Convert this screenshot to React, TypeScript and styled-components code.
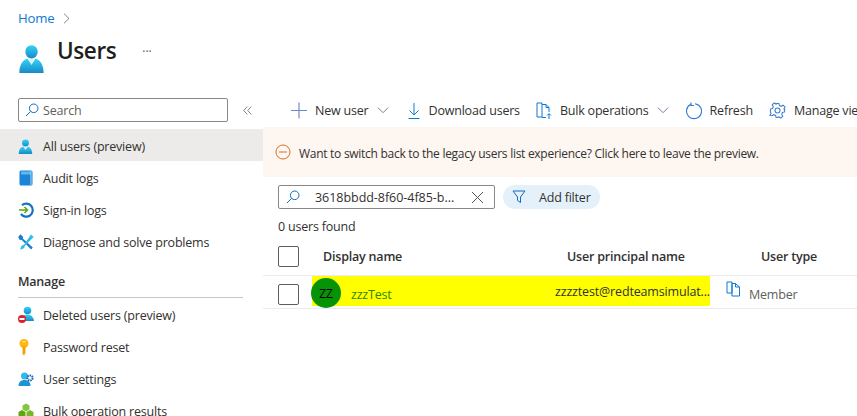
import React from "react";
import styled, { createGlobalStyle } from "styled-components";

const GlobalStyle = createGlobalStyle`
  html, body {
    margin: 0;
    padding: 0;
    background: #fff;
    overflow: hidden;
  }
  body {
    font-family: "Open Sans", "Noto Sans", "Liberation Sans", sans-serif;
    font-size: 12.5px;
    color: #323130;
    letter-spacing: -0.2px;
  }
`;

const UserGlyph = ({ width = 20, height = 20 }: { width?: number; height?: number }) => (
  <svg width={width} height={height} viewBox="0 0 20 20" preserveAspectRatio="none">
    <defs>
      <linearGradient id="ug" x1="0" y1="0" x2="0" y2="1">
        <stop offset="0" stopColor="#32d4f5" />
        <stop offset="1" stopColor="#1988c8" />
      </linearGradient>
    </defs>
    <circle cx="10" cy="5.4" r="4.6" fill="url(#ug)" />
    <path d="M1 20c0-6 3-9.500 6-9.800L10 14l3-3.800c3 .3 6 3.800 6 9.800z" fill="url(#ug)" />
    <path d="M7.500 10.400h5L10 14.500z" fill="#d9f3fb" />
  </svg>
);

const BookGlyph = () => (
  <svg width="16" height="16" viewBox="0 0 16 16">
    <rect x="1.500" y="0.500" width="13" height="15" rx="1.500" fill="#1b84d6" />
    <rect x="3" y="1.500" width="10" height="3" fill="#5fb8f0" />
    <rect x="12.500" y="1" width="1" height="14" fill="#a7d5f5" />
  </svg>
);

const SignInGlyph = () => (
  <svg width="16" height="16" viewBox="0 0 16 16" fill="none">
    <path d="M4 3.200A6.500 6.500 0 1 1 3 12" stroke="#0f74c4" strokeWidth="2.200" />
    <path d="M1 8h8.500M6.500 5l3 3-3 3" stroke="#5ea60e" strokeWidth="1.500" />
  </svg>
);

const ToolsGlyph = () => (
  <svg width="16" height="16" viewBox="0 0 16 16">
    <path d="M2.500 0.200L5.200 3l-.4 1.600 10 9-1.700 2-9.300-9.500-2.300-.3L0.200 3z" fill="#1b7fd0" />
    <path d="M13 0.500l2.700 2.500-8.700 8.700-1 2.500-4 1.600 1.500-4.100 2.500-1z" fill="#32bde8" />
  </svg>
);

const DeletedGlyph = () => (
  <svg width="17" height="18" viewBox="0 0 17 18">
    <defs>
      <linearGradient id="dg" x1="0" y1="0" x2="0" y2="1">
        <stop offset="0" stopColor="#32d4f5" />
        <stop offset="1" stopColor="#1988c8" />
      </linearGradient>
    </defs>
    <circle cx="9.500" cy="4.500" r="3.800" fill="url(#dg)" />
    <path d="M3.500 15c0-4 2.500-6.500 6-6.500s6 2.500 6.500 6.500z" fill="url(#dg)" />
    <circle cx="4" cy="13" r="4" fill="#d8232a" />
    <rect x="1.500" y="12" width="5" height="2" fill="#fff" />
  </svg>
);

const KeyGlyph = () => (
  <svg width="12" height="17" viewBox="0 0 12 17">
    <circle cx="6" cy="4.500" r="4.500" fill="#fcb914" />
    <path d="M4.500 7h3v7L6 16.500 4.500 15z" fill="#f2a60c" />
    <rect x="4.500" y="2" width="3" height="1.500" fill="#ffe08a" />
  </svg>
);

const SettingsGlyph = () => (
  <svg width="16" height="15" viewBox="0 0 16 15">
    <circle cx="6.500" cy="4" r="3.500" fill="#30b8e6" />
    <path d="M0.500 14c0-4 2.500-6 6-6s6 2 6 6z" fill="#1f93d4" />
    <circle cx="12" cy="6" r="2.600" fill="none" stroke="#1565c0" strokeWidth="2" strokeDasharray="1.500 0.800" />
  </svg>
);

const CubesGlyph = () => (
  <svg width="16" height="16" viewBox="0 0 16 16">
    <path d="M8 0.500l3.500 2v4L8 8.500l-3.500-2v-4z" fill="#86c540" />
    <path d="M4 7l3.500 2v4L4 15 .5 13V9z" fill="#5ea60e" />
    <path d="M12 7l3.500 2v4L12 15l-3.500-2V9z" fill="#76b82a" />
  </svg>
);

const SearchGlyph = () => (
  <svg width="14" height="14" viewBox="0 0 14 14" fill="none" stroke="#0f6cbd" strokeWidth="1">
    <circle cx="8.700" cy="5.300" r="4.300" />
    <path d="M5.600 8.400L1 13" />
  </svg>
);

const Chevron = () => (
  <svg width="12" height="7" viewBox="0 0 12 7" fill="none" stroke="#6f7e96" strokeWidth="1">
    <path d="M1 .7l5 5 5-5" />
  </svg>
);

const navTop = [
  { label: "All users (preview)", icon: <UserGlyph width={15} height={15} />, active: true },
  { label: "Audit logs", icon: <BookGlyph /> },
  { label: "Sign-in logs", icon: <SignInGlyph /> },
  { label: "Diagnose and solve problems", icon: <ToolsGlyph /> },
];

const navManage = [
  { label: "Deleted users (preview)", icon: <DeletedGlyph /> },
  { label: "Password reset", icon: <KeyGlyph /> },
  { label: "User settings", icon: <SettingsGlyph /> },
  { label: "Bulk operation results", icon: <CubesGlyph /> },
];

export default function App() {
  return (
    <Page>
      <GlobalStyle />
      <Header>
        <Crumbs>
          <HomeLink>Home</HomeLink>
          <svg width="7" height="11" viewBox="0 0 7 11" fill="none" stroke="#7a7a7a" strokeWidth="0.900">
            <path d="M1 .7l5 4.800-5 4.800" />
          </svg>
        </Crumbs>
        <TitleRow>
          <TitleIcon>
            <UserGlyph width={27} height={29} />
          </TitleIcon>
          <Title>Users</Title>
          <More>···</More>
        </TitleRow>
      </Header>
      <Body>
        <Sidebar>
          <SideSearchRow>
            <SideSearch>
              <SearchGlyph />
              <span>Search</span>
            </SideSearch>
            <Collapse>
              <svg width="9" height="9" viewBox="0 0 9 9" fill="none" stroke="#777" strokeWidth="0.900">
                <path d="M4.300 .5L.7 4.500l3.600 4M8.300 .5L4.700 4.500l3.600 4" />
              </svg>
            </Collapse>
          </SideSearchRow>
          {navTop.map((n) => (
            <NavItem key={n.label} $active={n.active}>
              <NavIcon>{n.icon}</NavIcon>
              {n.label}
            </NavItem>
          ))}
          <SectionTitle>Manage</SectionTitle>
          {navManage.map((n) => (
            <NavItem key={n.label}>
              <NavIcon>{n.icon}</NavIcon>
              {n.label}
            </NavItem>
          ))}
        </Sidebar>
        <Main>
          <Toolbar>
            <ToolButton $tail={2}>
              <svg width="16" height="17" viewBox="0 0 17 17" stroke="#6f86c9" strokeWidth="1.200">
                <path d="M8.500 0v17M0 8.500h17" />
              </svg>
              New user
              <Chevron />
            </ToolButton>
            <ToolButton>
              <svg width="14" height="18" viewBox="0 0 14 18" fill="none" stroke="#0f78d4" strokeWidth="1">
                <path d="M7 1v12M2.500 8.500L7 13l4.500-4.500M1.500 16.500h11" />
              </svg>
              Download users
            </ToolButton>
            <ToolButton>
              <svg width="16" height="18" viewBox="0 0 16 18" fill="none" stroke="#0f78d4" strokeWidth="1">
                <path d="M1 1h5v14H1zM6 2.500h4l3 3V10M10 2.500v3h3M6 15.500h4M13 17v-5M11 13.500l2-2 2 2" />
              </svg>
              Bulk operations
              <Chevron />
            </ToolButton>
            <ToolButton>
              <svg width="17" height="18" viewBox="0 0 17 18" fill="none" stroke="#2b7cd3" strokeWidth="1.100">
                <path d="M5.500 2.500a7.500 7.500 0 1 0 4.500-.8M6 .5v3h3" />
              </svg>
              Refresh
            </ToolButton>
            <ToolButton>
              <svg width="17" height="17" viewBox="0 0 24 24" fill="none" stroke="#3f7fd0" strokeWidth="1.500">
                <circle cx="12" cy="12" r="3.500" />
                <path d="M10 2h4l.7 3 2.500 1.100 2.700-1.600 2.800 2.800-1.600 2.700L22 10v4l-3 .7-1.100 2.500 1.600 2.700-2.800 2.800-2.700-1.600-2.500.9H10l-.7-3-2.500-1.100-2.700 1.600L1.300 19l1.600-2.700L2 14v-4l3-.7 1.100-2.500L4.500 4 7.300 1.300 10 2.900z" />
              </svg>
              Manage view
            </ToolButton>
          </Toolbar>
          <Banner>
            <svg width="16" height="16" viewBox="0 0 16 16" fill="none" stroke="#d9701f" strokeWidth="1">
              <circle cx="8" cy="8" r="7" />
              <path d="M4 8h8" />
            </svg>
            <BannerText>
              Want to switch back to the legacy users list experience? Click here to leave the preview.
            </BannerText>
          </Banner>
          <Filters>
            <FilterSearch>
              <SearchGlyph />
              <FilterValue>3618bbdd-8f60-4f85-b...</FilterValue>
              <svg width="13" height="13" viewBox="0 0 13 13" stroke="#555" strokeWidth="1">
                <path d="M1 1l11 11M12 1L1 12" />
              </svg>
            </FilterSearch>
            <FilterPill>
              <svg width="14" height="14" viewBox="0 0 14 14" fill="none" stroke="#0f6cbd" strokeWidth="1">
                <path d="M1 1h12L8.500 7v5.500l-3-2V7z" />
              </svg>
              Add filter
            </FilterPill>
          </Filters>
          <Count>0 users found</Count>
          <HeadRow>
            <Check />
            <HeadName>Display name</HeadName>
            <HeadUpn>User principal name</HeadUpn>
            <HeadType>User type</HeadType>
          </HeadRow>
          <DataRow>
            <Check />
            <Highlight>
              <Avatar>ZZ</Avatar>
              <NameLink>zzzTest</NameLink>
              <Upn>zzzztest@redteamsimulat...</Upn>
            </Highlight>
            <CopyIcon>
              <svg width="15" height="16" viewBox="0 0 15 16" fill="none" stroke="#0f78d4" strokeWidth="1">
                <path d="M1 1h5v11H1zM6 2.500h3.500L13.500 6v9H6zM9.500 2.500V6h4" />
              </svg>
            </CopyIcon>
            <Member>Member</Member>
          </DataRow>
        </Main>
      </Body>
    </Page>
  );
}

const Page = styled.div`
  width: 857px;
  height: 416px;
  overflow: hidden;
  display: flex;
  flex-direction: column;
`;

const Header = styled.header`
  height: 92px;
  padding: 9px 0 0 18px;
  box-sizing: border-box;
  flex: none;
`;

const Crumbs = styled.div`
  display: flex;
  align-items: center;
  gap: 9px;
  height: 18px;
`;

const HomeLink = styled.a`
  color: #0f78d4;
  font-size: 13.2px;
`;

const TitleRow = styled.div`
  display: flex;
  align-items: flex-start;
  margin-top: 8px;
`;

const TitleIcon = styled.div`
  margin-top: 9px;
  height: 29px;
  width: 39px;
`;

const Title = styled.h1`
  margin: 0;
  font-size: 22.5px;
  line-height: 32px;
  font-weight: 600;
  color: #201f1e;
  letter-spacing: -0.4px;
`;

const More = styled.span`
  margin: 8px 0 0 26px;
  font-size: 12px;
  color: #555;
  letter-spacing: 0;
`;

const Body = styled.div`
  display: flex;
  flex: 1;
  min-height: 0;
`;

const Sidebar = styled.nav`
  width: 263px;
  flex: none;
`;

const SideSearchRow = styled.div`
  display: flex;
  align-items: flex-start;
  height: 37px;
  padding: 6px 0 0 18px;
  box-sizing: border-box;
`;

const SideSearch = styled.div`
  width: 210px;
  height: 24px;
  box-sizing: border-box;
  border: 1px solid #8a8886;
  border-radius: 2px;
  display: flex;
  align-items: center;
  gap: 4px;
  padding-left: 6px;
  color: #605e5c;
`;

const Collapse = styled.span`
  margin: 8px 0 0 15px;
  display: flex;
`;

const NavItem = styled.div<{ $active?: boolean }>`
  height: 32px;
  box-sizing: border-box;
  padding: 2px 0 0 18px;
  display: flex;
  align-items: center;
  white-space: nowrap;
  background: ${(p) => (p.$active ? "#edebe9" : "transparent")};
`;

const NavIcon = styled.span`
  width: 25px;
  display: flex;
  justify-content: flex-start;
  flex: none;
`;

const SectionTitle = styled.div`
  margin: 11px 20px 0 18px;
  height: 30px;
  line-height: 28px;
  border-bottom: 1px solid #c8c6c4;
  box-sizing: border-box;
  font-weight: 600;
  color: #323130;
`;

const Main = styled.main`
  flex: 1;
  min-width: 0;
  overflow: hidden;
`;

const Toolbar = styled.div`
  height: 35px;
  box-sizing: border-box;
  padding: 2px 0 0 28px;
  display: flex;
  align-items: center;
  gap: 16px;
  white-space: nowrap;
`;

const ToolButton = styled.div<{ $tail?: number }>`
  display: flex;
  align-items: center;
  gap: 8px;
  flex: none;
  margin-right: ${(p) => p.$tail ?? 0}px;
`;

const Banner = styled.div`
  height: 50px;
  background: #fdf6f1;
  display: flex;
  align-items: center;
  gap: 8px;
  padding-left: 12px;
  white-space: nowrap;
  font-size: 12px;
`;

const BannerText = styled.span`
  margin-top: 2px;
  letter-spacing: -0.28px;
`;

const Filters = styled.div`
  display: flex;
  gap: 8px;
  padding: 8px 0 0 15px;
`;

const FilterSearch = styled.div`
  width: 217px;
  height: 24px;
  box-sizing: border-box;
  border: 1px solid #8a8886;
  border-radius: 2px;
  display: flex;
  align-items: center;
  padding: 0 10px 0 7px;
`;

const FilterValue = styled.span`
  flex: 1;
  margin-left: 15px;
  white-space: nowrap;
  letter-spacing: -0.04px;
`;

const FilterPill = styled.div`
  width: 97px;
  height: 24px;
  box-sizing: border-box;
  border-radius: 12px;
  background: #e5f1fa;
  display: flex;
  align-items: center;
  gap: 13px;
  padding-left: 9px;
`;

const Count = styled.div`
  padding-left: 15px;
  margin-top: 8px;
  height: 19px;
  line-height: 20px;
`;

const HeadRow = styled.div`
  display: flex;
  align-items: center;
  height: 40px;
  padding: 2px 0 0 15px;
  border-bottom: 1px solid #edebe9;
  box-sizing: border-box;
  font-weight: 600;
  white-space: nowrap;
`;

const Check = styled.div`
  width: 21px;
  height: 21px;
  box-sizing: border-box;
  border: 1px solid #605e5c;
  border-radius: 2px;
  flex: none;
`;

const HeadName = styled.span`
  margin-left: 24px;
  width: 244px;
  flex: none;
`;

const HeadUpn = styled.span`
  width: 194px;
  flex: none;
`;

const HeadType = styled.span`
  flex: none;
`;

const DataRow = styled.div`
  display: flex;
  align-items: flex-start;
  height: 33px;
  padding-left: 15px;
  border-bottom: 1px solid #edebe9;
  box-sizing: border-box;
  white-space: nowrap;
  & > ${Check} {
    margin-top: 8px;
  }
`;

const Highlight = styled.div`
  margin-left: 13px;
  width: 398px;
  height: 30px;
  background: #ffff00;
  display: flex;
  align-items: center;
  flex: none;
`;

const Avatar = styled.div`
  width: 30px;
  height: 30px;
  border-radius: 50%;
  background: #069306;
  color: #000;
  font-size: 12px;
  display: flex;
  align-items: center;
  justify-content: center;
  margin: 4px 0 0 -1px;
  flex: none;
`;

const NameLink = styled.a`
  margin-left: 10px;
  width: 204px;
  flex: none;
  color: #2f8a00;
  padding-top: 6px;
`;

const Upn = styled.span`
  color: #323130;
  letter-spacing: -0.16px;
`;

const CopyIcon = styled.span`
  margin: 5px 0 0 16px;
  flex: none;
`;

const Member = styled.span`
  margin: 10px 0 0 8px;
  color: #605e5c;
`;
